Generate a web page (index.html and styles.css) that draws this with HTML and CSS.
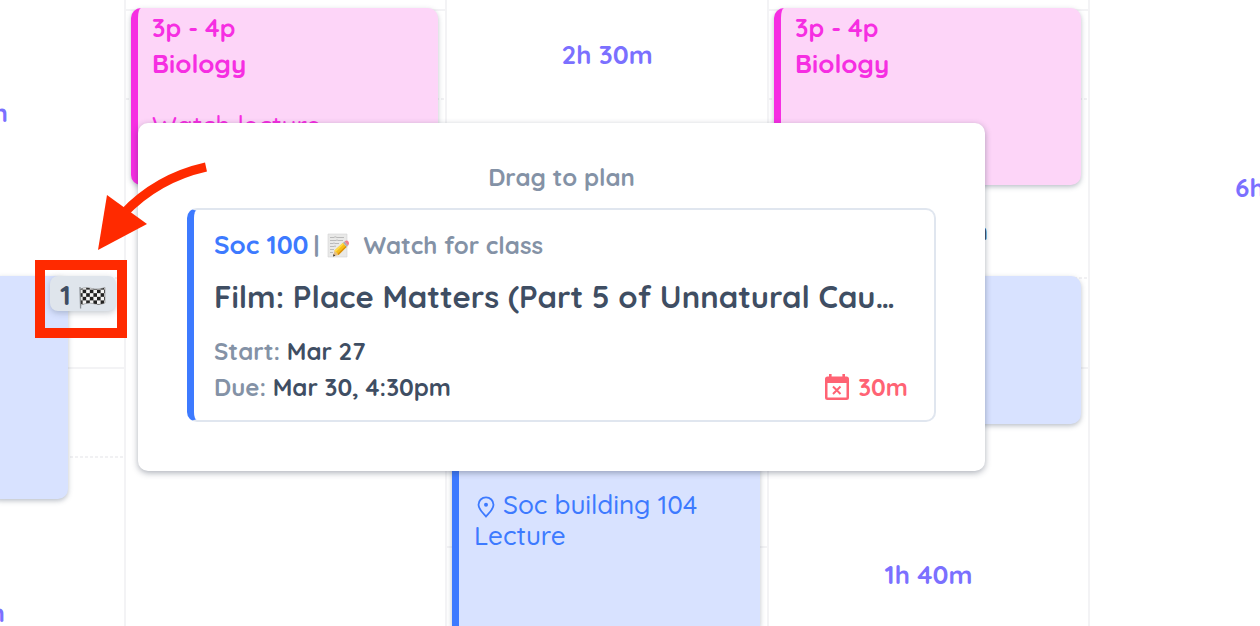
FILE: index.html
```html
<!DOCTYPE html>
<html lang="en">
<head>
<meta charset="utf-8">
<title>Week planner</title>
<link rel="stylesheet" href="styles.css">
</head>
<body>
<main class="calendar">
  <section class="day day-first">
    <div class="free free-top"><span class="gap-label">m</span></div>
    <article class="event blue continued"></article>
    <div class="free fill free-late"><span class="gap-label">m</span></div>
  </section>
  <section class="day">
    <article class="event pink class-hour">
      <p class="time">3p - 4p</p>
      <h2 class="name">Biology</h2>
      <p class="note">Watch lecture</p>
    </article>
    <div class="free fill"></div>
  </section>
  <section class="day">
    <div class="free free-mid"><span class="gap-label">2h 30m</span></div>
    <article class="event blue lecture">
      <p class="place"><svg class="pin" viewBox="0 0 20 24" aria-hidden="true"><path d="M10 21.5C7.500 18.500 2.500 14.500 2.500 9.800a7.500 7.500 0 0 1 15 0C17.500 14.500 12.500 18.500 10 21.500z" fill="none" stroke="currentColor" stroke-width="1.800"/><circle cx="10" cy="9.800" r="2" fill="currentColor"/></svg>Soc building 104</p>
      <p class="place">Lecture</p>
    </article>
  </section>
  <section class="day">
    <article class="event pink class-hour">
      <p class="time">3p - 4p</p>
      <h2 class="name">Biology</h2>
    </article>
    <div class="free break"><span class="break-label">30m</span></div>
    <article class="event blue short"></article>
    <div class="free fill free-evening"><span class="gap-label">1h 40m</span></div>
  </section>
  <section class="day day-last">
    <div class="free fill free-long"><span class="gap-label">6h</span></div>
  </section>
</main>

<button class="due-badge" type="button" aria-label="1 task due">
  <span>1</span>
  <svg class="flag" viewBox="0 0 27 23" aria-hidden="true">
    <defs>
      <pattern id="checks" width="7.200" height="7.200" patternUnits="userSpaceOnUse">
        <rect width="7.200" height="7.200" fill="#f4f4f4"/>
        <rect width="3.600" height="3.600" fill="#222"/>
        <rect x="3.600" y="3.600" width="3.600" height="3.600" fill="#222"/>
      </pattern>
    </defs>
    <path d="M1 1 1.600 22.500" stroke="#8b9096" stroke-width="1.300"/>
    <path d="M1.500 3C6 1 9 1.500 13 2.500S21 3 26 1.500V17C21 19 18 18.500 14 17.500S6 17.500 2 19z" fill="url(#checks)" stroke="#777" stroke-width=".5"/>
  </svg>
</button>

<section class="popover">
  <h1 class="hint">Drag to plan</h1>
  <article class="task">
    <p class="task-head"><strong class="course">Soc 100</strong><span class="bar">|</span>
      <svg class="memo" viewBox="0 0 22 25" aria-hidden="true">
        <path d="M1 1h19v23H1z" fill="#e9e9e8" stroke="#d5d5d5" stroke-width=".6"/>
        <path d="M3 4.500h4l1-.8 2 .8h7M3 7.500h6l1-.6 1 .6h5M3 10.500h3l1-.6 1 .6h4M3 13.500h4l1-.6 1 .6M3 16.500h4M3 19.500h3" fill="none" stroke="#b4b4b4" stroke-width=".9"/>
        <path d="M6 23.500 7.500 17.500 11.500 22z" fill="#e5bd83"/>
        <path d="M6 23.500 6.600 21 8.300 22.800z" fill="#333"/>
        <path d="M7.500 17.500 16 9.800 19.500 14 11.500 22z" fill="#f8bd18"/>
        <path d="M7.500 17.500 16 9.800 17 11 8.700 18.900z" fill="#ffdc4c"/>
        <path d="M10.500 21 18.700 13 19.500 14 11.500 22z" fill="#d98d0b"/>
        <path d="M16 9.800 17.600 8.500 21 12.700 19.500 14z" fill="#a9b0b5"/>
        <path d="M17.600 8.500C19 7 20.500 7.200 21.400 8.500S22 11.800 21 12.700z" fill="#f07f8c"/>
      </svg>
      <span class="kind">Watch for class</span></p>
    <h2 class="task-title">Film: Place Matters (Part 5 of Unnatural Causes)</h2>
    <p class="row"><span>Start:</span> <b>Mar 27</b></p>
    <div class="row-end">
      <p class="row"><span>Due:</span> <b>Mar 30, 4:30pm</b></p>
      <p class="left"><svg class="cal" viewBox="0 0 24 26" aria-hidden="true"><path d="M4 0h2.600v2.500h10.800V0H20v2.500h1.500A2.500 2.500 0 0 1 24 5v18.500a2.500 2.500 0 0 1-2.500 2.500h-19A2.500 2.500 0 0 1 0 23.500V5a2.500 2.500 0 0 1 2.500-2.500H4zM2.500 9v14.500h19V9z" fill="currentColor" fill-rule="evenodd"/><path d="m8 12.500 7.500 7.500M15.500 12.500 8 20" stroke="currentColor" stroke-width="2"/></svg>30m</p>
    </div>
  </article>
</section>

<div class="frame"></div>
<svg class="arrow" viewBox="0 0 116 94" aria-hidden="true"><path d="M114 9Q65 20 31 56" fill="none" stroke="#ff2a00" stroke-width="9"/><path d="M15 37 55 66 6 92z" fill="#ff2a00"/></svg>
</body>
</html>
```
FILE: styles.css
```css
* { box-sizing: border-box; }
body {
  margin: 0;
  position: relative;
  min-height: 100vh;
  overflow: hidden;
  background: #fff;
  color: #3f4e63;
  font-family: Quicksand, Lato, "Open Sans", sans-serif;
}
h1, h2, p { margin: 0; }

.calendar {
  display: grid;
  grid-template-columns: 126fr 321fr 322fr 321fr 170fr;
  height: 100vh;
  overflow: hidden;
}
.day {
  display: flex;
  flex-direction: column;
  min-width: 0;
  overflow: hidden;
  padding-top: 8px;
  border-right: 2px solid #f3f3f5;
  background:
    conic-gradient(at 3px 2px, transparent 75%, #f1f1f3 0) 0 98px / 5px 179px,
    linear-gradient(#f3f3f5 2px, transparent 2px) 0 9px / 100% 179px;
}
.day-last { border-right: 0; }
.day-first, .day-last, .day:nth-child(3) { padding-top: 0; }

.free {
  display: flex;
  flex: none;
  justify-content: center;
  background: #fff;
}
.fill { flex: 1; }
.gap-label {
  color: #7b70ff;
  font-size: 26px;
  line-height: 32px;
  font-weight: 700;
  white-space: nowrap;
}
.free-top { height: 276px; padding: 97px 116px 0 0; justify-content: flex-end; }
.free-late { padding: 98px 119px 0 0; justify-content: flex-end; }
.free-mid { height: 300px; padding-top: 39px; }
.free-evening { padding-top: 135px; }
.free-long { padding: 172px 0 0 145px; justify-content: flex-start; }
.break { height: 91px; padding: 34px 100px 0 0; justify-content: flex-end; }
.break-label { font-size: 24px; line-height: 24px; font-weight: 700; }

.event {
  position: relative;
  flex: none;
  margin: 0 7px 0 5px;
  padding: 4px 14px;
  border-left: 7px solid;
  border-radius: 10px;
  box-shadow: 0 2px 5px rgba(63, 78, 99, .35);
}
.pink { color: #f62ee2; background: #fdd5f8; }
.blue { color: #3d7aff; background: #d8e2ff; }
.class-hour { height: 177px; }
.continued { height: 223px; margin: 0 56px 0 -10px; }
.short { height: 148px; }
.lecture { flex: 1; border-radius: 10px 10px 0 0; padding-top: 189px; padding-left: 15px; }
.time { font-size: 25px; line-height: 32px; font-weight: 700; }
.name { font-size: 26px; line-height: 40px; font-weight: 700; }
.note { margin-top: 26px; font-size: 26px; line-height: 32px; font-weight: 500; }
.place { display: flex; align-items: center; font-size: 26px; line-height: 31px; font-weight: 500; }
.pin { width: 20px; height: 24px; margin: 4px 7px 0 2px; }

.due-badge {
  position: absolute;
  left: 50px;
  top: 276px;
  display: flex;
  align-items: center;
  gap: 8px;
  height: 35px;
  padding: 0 10px;
  border: 0;
  border-radius: 8px;
  background: #dfe5ec;
  color: #3f4e63;
  box-shadow: 0 2px 6px rgba(63, 78, 99, .3);
  font: inherit;
  font-size: 28px;
  font-weight: 700;
}
.due-badge span { padding-top: 2px; }
.flag { width: 27px; height: 23px; margin-top: 8px; }

.popover {
  position: absolute;
  left: 138px;
  right: 275px;
  top: 123px;
  padding: 38px 49px 49px;
  border-radius: 10px;
  background: #fff;
  box-shadow: 0 2px 6px rgba(40, 50, 70, .38);
}
.hint {
  margin-bottom: 15px;
  color: #8492a6;
  font-size: 24px;
  line-height: 32px;
  font-weight: 700;
  text-align: center;
}
.task {
  padding: 17px 26px 15px 20px;
  border: 2px solid #e0e6ef;
  border-left: 7px solid #3d7aff;
  border-radius: 10px;
}
.task-head {
  display: flex;
  align-items: center;
  color: #8492a6;
  font-size: 24px;
  line-height: 36px;
  font-weight: 700;
}
.course { color: #3d7aff; font-size: 26px; }
.bar { margin-left: 5px; }
.memo { width: 22px; height: 25px; margin: 0 15px 0 7px; }
.task-title {
  margin: 12px 0 14px;
  overflow: hidden;
  font-size: 31px;
  line-height: 44px;
  font-weight: 700;
  white-space: nowrap;
  text-overflow: ellipsis;
}
.row { color: #8492a6; font-size: 24px; line-height: 36px; font-weight: 700; }
.row b { color: #3f4e63; }
.row-end { display: flex; justify-content: space-between; align-items: center; }
.left {
  display: flex;
  align-items: center;
  gap: 9px;
  color: #ff6374;
  font-size: 24px;
  line-height: 36px;
  font-weight: 700;
}
.cal { width: 24px; height: 26px; }

.frame {
  position: absolute;
  left: 35px;
  top: 260px;
  width: 92px;
  height: 78px;
  border: 10px solid #ff2a00;
  pointer-events: none;
}
.arrow {
  position: absolute;
  left: 92px;
  top: 158px;
  width: 116px;
  height: 94px;
  pointer-events: none;
}
```
